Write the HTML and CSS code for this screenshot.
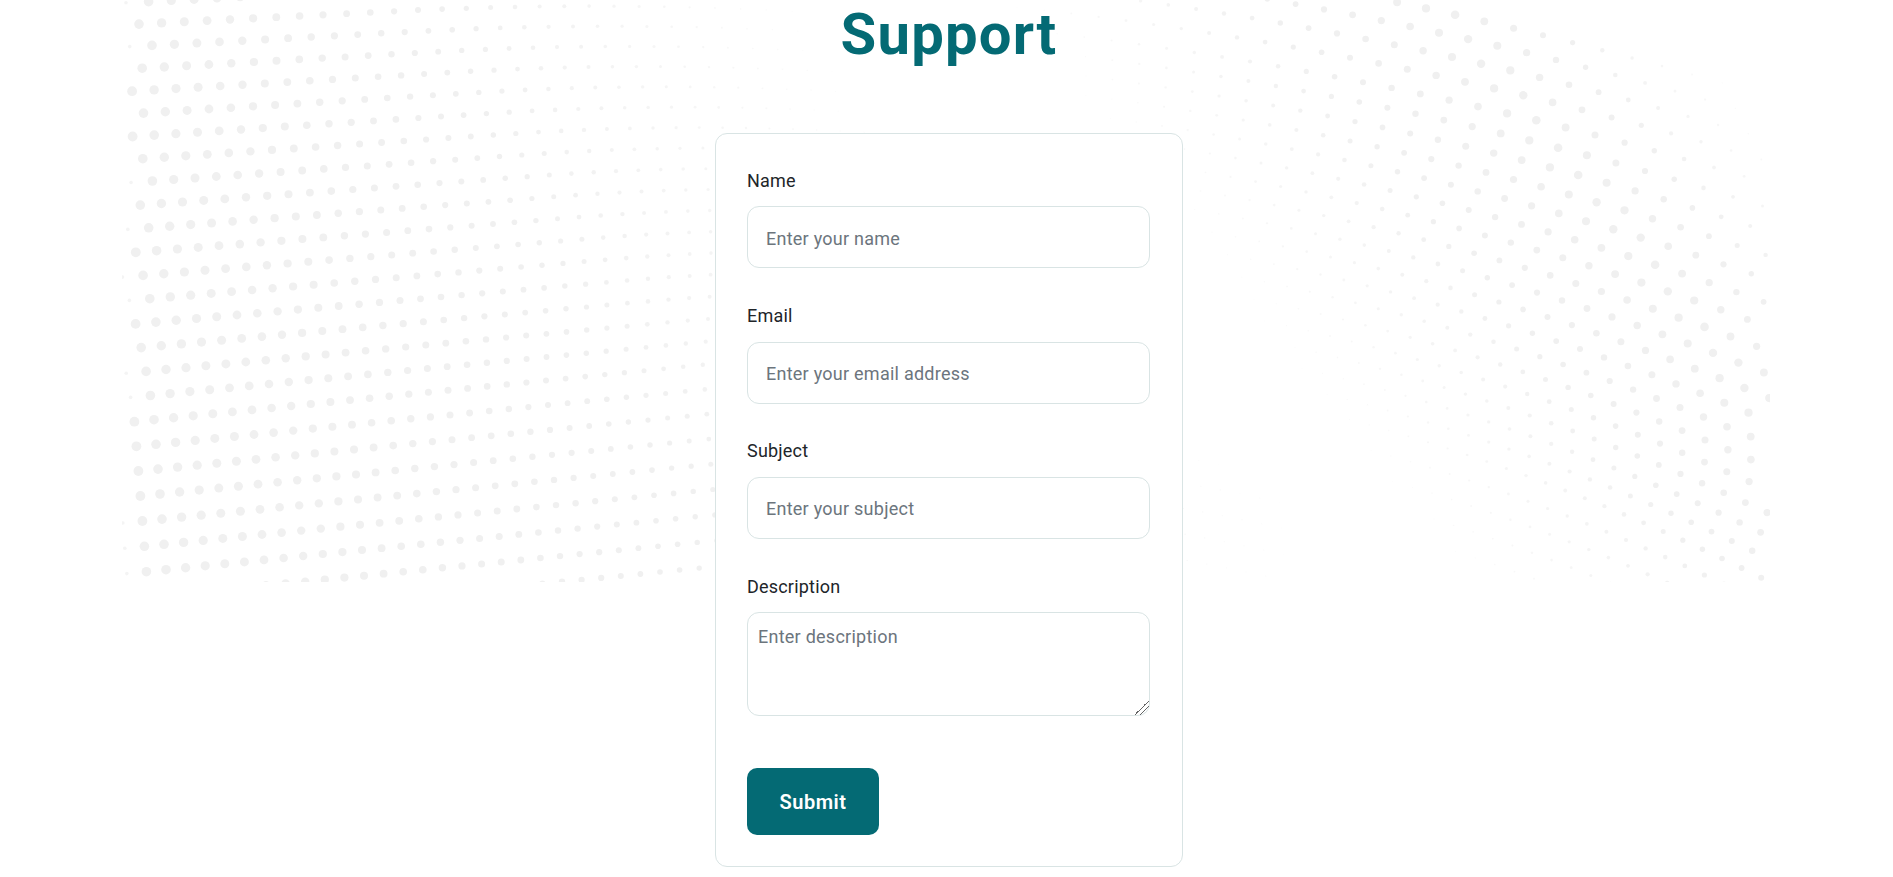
FILE: index.html
```html
<!DOCTYPE html>
<html lang="en">
<head>
    <meta charset="UTF-8">
    <meta name="viewport" content="width=device-width, initial-scale=1.0">
    <title>Support</title>
    <link rel="stylesheet" href="styles.css">
</head>
<body>
    <svg id="dots" class="dots" width="1648" height="582" aria-hidden="true"></svg>

    <main class="support">
        <h1 class="support-title">Support</h1>

        <form class="support-card">
            <div class="form-group">
                <label for="name">Name</label>
                <input id="name" type="text" placeholder="Enter your name">
            </div>
            <div class="form-group">
                <label for="email">Email</label>
                <input id="email" type="email" placeholder="Enter your email address">
            </div>
            <div class="form-group">
                <label for="subject">Subject</label>
                <input id="subject" type="text" placeholder="Enter your subject">
            </div>
            <div class="form-group form-group-last">
                <label for="description">Description</label>
                <textarea id="description" placeholder="Enter description"></textarea>
            </div>
            <button class="submit-button" type="button">Submit</button>
        </form>
    </main>

    <script src="script.js"></script>
</body>
</html>
```

FILE: styles.css
```css
* {
    margin: 0;
    padding: 0;
    box-sizing: border-box;
    font-family: 'Roboto', 'Liberation Sans', sans-serif;
}

body {
    background-color: #fff;
    position: relative;
    overflow: hidden;
    height: 877px;
}

/* halftone backdrop, filled in by script.js */
.dots {
    position: absolute;
    top: 0;
    left: 122px;
    z-index: 0;
}

.dots circle {
    fill: #f0f0f0;
}

.support {
    position: relative;
    z-index: 1;
    display: flex;
    flex-direction: column;
    align-items: center;
    padding-left: 5px;
}

.support-title {
    font-size: 58px;
    font-weight: 700;
    line-height: 68px;
    letter-spacing: 1.2px;
    color: #046a74;
    margin-bottom: 65px;
}

.support-card {
    width: 468px;
    height: 734px;
    background: #fff;
    border: 1px solid #d9e4e4;
    border-radius: 12px;
    padding: 35px 32px 30px 31px;
}

.form-group {
    margin-bottom: 35.8px;
}

.form-group-last {
    margin-bottom: 52px;
}

.form-group label {
    display: block;
    font-size: 18px;
    line-height: 24px;
    letter-spacing: 0.2px;
    color: #212529;
    margin-bottom: 13.4px;
}

.form-group input,
.form-group textarea {
    display: block;
    width: 100%;
    background: #fff;
    border: 1px solid #d9e4e4;
    border-radius: 12px;
    font-size: 18px;
    letter-spacing: 0.25px;
    color: #212529;
    outline: none;
}

.form-group input {
    height: 62px;
    padding: 2px 18px 0;
}

.form-group textarea {
    height: 104px;
    padding: 12px 10px;
    line-height: 24px;
}

.form-group textarea::-webkit-resizer {
    background: linear-gradient(135deg, transparent 50%, #666 50%, #666 54%, transparent 54%, transparent 69%, #666 69%, #666 73%, transparent 73%);
}

.form-group input::placeholder,
.form-group textarea::placeholder {
    color: #6c757d;
    opacity: 1;
}

.submit-button {
    display: block;
    width: 132px;
    height: 67px;
    padding-top: 2px;
    background: #046a74;
    color: #fff;
    border: none;
    border-radius: 10px;
    font-size: 20px;
    font-weight: 600;
    letter-spacing: 0.5px;
}
```

FILE: script.js
```js
// Warped lattice of dots behind the form. Numbers measured off the design.
const svg = document.getElementById('dots');
const OFFSET_X = 122;
const WIDTH = 1648;
const HEIGHT = 582;

function lerp(a, b, w) {
    return a + (b - a) * w;
}

function rowY(k) {
    return 24 + 22 * k + 0.08 * k * k;
}

function rowStartX(k) {
    let x = 139;
    for (let i = 0; i < k; i++) {
        x += Math.max(2, 13 - 0.65 * i);
    }
    return x;
}

function dotRadius(x, y) {
    const leftSlope = lerp(0.0068, 0.0039, Math.min(y / 500, 1));
    const left = 4.9 - (x - 130) * leftSlope;
    const ridge = x - (1445 + 0.79 * y);
    const right = ridge > 0 ? 4.3 * (1 - ridge / 240) : 4.3 * (1 + ridge / 480);
    let r = Math.max(left, right);
    if (x < 132) r = Math.min(r, 1.8);
    return r;
}

for (let k = -4; k < 26; k++) {
    const w = Math.max(0, Math.min(k / 17, 1));
    const step = lerp(22.5, 19.6, w);
    const bend = lerp(0.0625, 0, w);
    const slopeLeft = lerp(-0.05, -0.1, w);
    const slopeRight = lerp(0.3, 0.5, w);
    const breakX = lerp(400, 700, w);

    for (let t = -12; t < 95; t++) {
        const curve = t > 0 ? bend * t * t : 0;
        const x = rowStartX(Math.max(k, 0)) + (k < 0 ? k * 13 : 0) + step * t + curve;
        const run = x - 140;
        let y = rowY(k) + slopeLeft * run;
        if (x > breakX) {
            y += (slopeRight - slopeLeft) * (x - breakX) * (x - breakX) / (2 * (1760 - breakX));
        }
        if (x < OFFSET_X || x > OFFSET_X + WIDTH || y < -6 || y > HEIGHT + 6) continue;

        const r = dotRadius(x, y);
        if (r < 0.4) continue;

        const dot = document.createElementNS('http://www.w3.org/2000/svg', 'circle');
        dot.setAttribute('cx', (x - OFFSET_X).toFixed(1));
        dot.setAttribute('cy', y.toFixed(1));
        dot.setAttribute('r', r.toFixed(1));
        dot.setAttribute('opacity', Math.min(1, 0.2 + r / 3.4).toFixed(2));
        svg.appendChild(dot);
    }
}
```
